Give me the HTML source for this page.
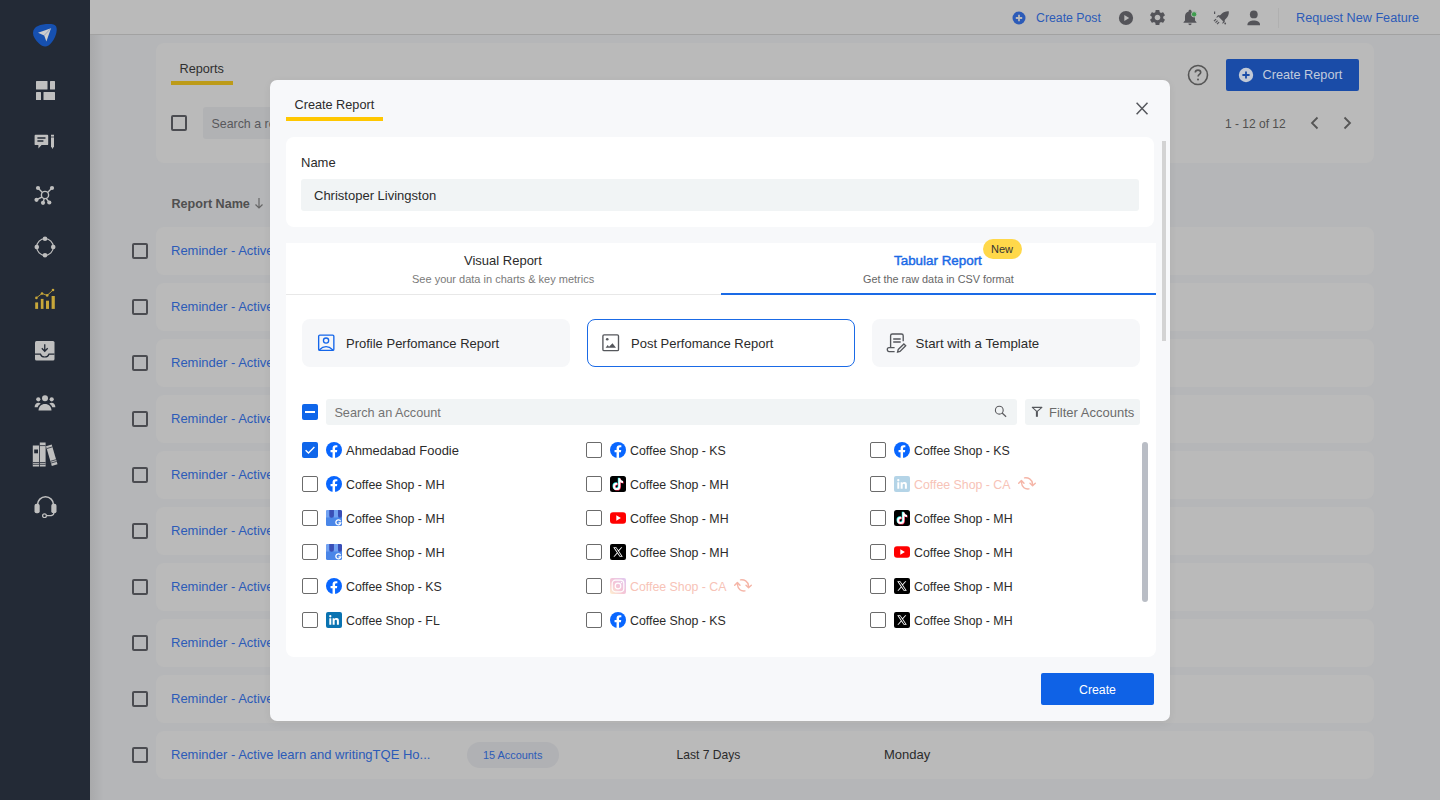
<!DOCTYPE html>
<html><head><meta charset="utf-8">
<style>
*{box-sizing:border-box;margin:0;padding:0}
html,body{width:1440px;height:800px;overflow:hidden;background:#b5b6b8;font-family:"Liberation Sans",sans-serif;color:#2b2b2b}
.a{position:absolute}
.t{position:absolute;white-space:nowrap;line-height:16px}
#side{left:0;top:0;width:90px;height:800px;background:#232a36}
#shadow{left:90px;top:0;width:14px;height:800px;background:linear-gradient(90deg,rgba(0,0,0,0.07),rgba(0,0,0,0))}
#top{left:90px;top:0;width:1350px;height:35px;background:#bababa;border-bottom:1px solid #a2a2a2}
.card{position:absolute;background:#bababa;border-radius:8px}
.cb{position:absolute;width:16px;height:16px;border:2px solid #4b4c51;border-radius:2px}
.lnk{color:#2c5bb8;font-size:13px}
#modal{left:270px;top:80px;width:900px;height:641px;background:#f7f8fa;border-radius:7px;box-shadow:0 2px 8px rgba(0,0,0,0.06)}

.mt{position:absolute;white-space:nowrap;line-height:16px;font-size:13px;color:#2b2b2b}
.acb{position:absolute;width:16px;height:16px;border:1px solid #6b6b6b;border-radius:2px;background:#fff}
.ic{position:absolute;width:16px;height:16px}
.rc{position:absolute;top:319px;width:268px;height:48px;border-radius:8px;background:#f6f7f9}
</style></head><body>
<svg width="0" height="0" style="position:absolute"><defs>
<symbol id="fb" viewBox="0 0 16 16"><circle cx="8" cy="8" r="8" fill="#0866ff"/><path fill="#fff" d="M10.9 10.3l.36-2.3H9.05V6.5c0-.63.31-1.25 1.3-1.25h1V3.3s-.91-.16-1.78-.16c-1.82 0-3 1.1-3 3.1V8H4.55v2.3h2.02V16h2.48v-5.7z"/></symbol>
<symbol id="tt" viewBox="0 0 16 16"><rect width="16" height="16" rx="2.5" fill="#000"/><g id="ttn"><path d="M8.4 2.3h1.9c.2 1.5 1.2 2.6 2.7 2.8v1.9c-1 0-1.9-.3-2.7-.8v4.2a3.6 3.6 0 1 1-3.6-3.6c.2 0 .4 0 .6.05v1.95a1.65 1.65 0 1 0 1.1 1.6z"/></g><use href="#ttn" fill="#25f4ee" x="-.6" y="-.5"/><use href="#ttn" fill="#fe2c55" x=".6" y=".5"/><use href="#ttn" fill="#fff"/></symbol>
<symbol id="yt" viewBox="0 0 16 16"><rect x="0" y="2.3" width="16" height="11.4" rx="3" fill="#ff0000"/><path fill="#fff" d="M6.3 5.3v5.4L10.9 8z"/></symbol>
<symbol id="xx" viewBox="0 0 16 16"><rect width="16" height="16" rx="2" fill="#000"/><path fill="#fff" d="M3.2 3.2h3.1l2.2 3.1 2.7-3.1h1.1l-3.3 3.8 3.8 5.8H9.7L7.4 9.5 4.5 12.8H3.4L6.9 8.8zM4.8 3.9l5.3 8.2h1.2L6 3.9z"/></symbol>
<symbol id="li" viewBox="0 0 16 16"><rect width="16" height="16" rx="2" fill="#0a73b1"/><path fill="#fff" d="M3.3 6.2h2v6.5h-2zM4.3 3.1a1.15 1.15 0 1 1 0 2.3 1.15 1.15 0 0 1 0-2.3zM6.6 6.2h1.9v.9c.3-.5.95-1.05 2-1.05 2.05 0 2.4 1.3 2.4 3v3.65h-2V9.5c0-.75 0-1.7-1.05-1.7s-1.2.8-1.2 1.65v3.25h-2z"/></symbol>
<symbol id="gmb" viewBox="0 0 16 16"><rect width="16" height="16" rx="1.6" fill="#4a86e8"/><path fill="#72a2f2" d="M1.6 0h1.8v7.4H0V1.6A1.6 1.6 0 0 1 1.6 0zM7.8 0h4.2v7.4H7.8z"/><path fill="#3a4eb6" d="M3.3 0h4.6v5.6a2.3 2.2 0 0 1-4.6 0zM12 0h2.4A1.6 1.6 0 0 1 16 1.6v4a2 2.2 0 0 1-4 0z"/><path fill="none" stroke="#fff" stroke-width="1.3" d="M14.6 11.2a2.5 2.5 0 1 0 .2 1.6h-2.3"/></symbol>
<symbol id="ig" viewBox="0 0 16 16"><defs><linearGradient id="igg" x1="0" y1="1" x2="1" y2="0"><stop offset="0" stop-color="#fdd36b"/><stop offset=".45" stop-color="#e1447a"/><stop offset="1" stop-color="#9b4fd0"/></linearGradient></defs><rect width="16" height="16" rx="2" fill="url(#igg)"/><rect x="2.2" y="2.2" width="11.6" height="11.6" rx="3.2" fill="none" stroke="#fff" stroke-width="1.2"/><circle cx="8" cy="8" r="2.8" fill="none" stroke="#fff" stroke-width="1.2"/><circle cx="11.5" cy="4.5" r=".75" fill="#fff"/></symbol>
<symbol id="rf" viewBox="0 0 26 24"><g fill="none" stroke="#f5b5a7" stroke-width="1.4" stroke-linecap="round" stroke-linejoin="round"><path d="M10.5 5.9c3.6-.5 7.6 1.2 8.1 6.3M16 11.3l2.6 2.5 2.7-2.5M15 16.9c-3.7.6-7.2-1.5-7.6-6.6M4.7 11.3l2.7-2.8 2.6 2.8"/></g></symbol>
</defs></svg>
<div id="side" class="a"></div>
<div id="shadow" class="a"></div>
<div id="top" class="a"></div>
<!-- sidebar icons -->
<svg class="a" style="left:28px;top:20px" width="34" height="32" viewBox="0 0 34 32"><path fill="#1650b0" d="M10 6C14 4 22 3.5 25.5 4.5 29 5.5 29.2 9 28.3 13 27.2 18 24 23 20.5 25.5 17.5 27.6 14 26.5 11 23.5 7.5 20 5 16.5 5 13 5 9.5 7 7.2 10 6z"/><path fill="#cdcdcd" d="M23 8.2L10 12.8l6.2 2.6 2.2 6.2z"/><path d="M16.2 15.4L23 8.2" stroke="#6f86b8" stroke-width=".6"/></svg>
<svg class="a" style="left:36px;top:81px" width="19" height="19" viewBox="0 0 19 19"><g fill="#bfbfbf"><rect x="0" y="0" width="11.5" height="8.5" rx=".5"/><rect x="14" y="0" width="5" height="8.5" rx=".5"/><rect x="0" y="11" width="5" height="8.5" rx=".5"/><rect x="7.5" y="11" width="11.5" height="8.5" rx=".5"/></g></svg>
<svg class="a" style="left:34px;top:134px" width="22" height="16" viewBox="0 0 22 16"><path fill="#bfbfbf" d="M1.5 0.8h11.8c.5 0 .9.4.9.9v8.5c0 .5-.4.9-.9.9H7.6l-3.2 3.3v-3.3H1.5c-.5 0-.9-.4-.9-.9V1.7c0-.5.4-.9.9-.9z"/><path d="M3.4 4h8.1M3.4 7h6" stroke="#232a36" stroke-width="1.3"/><path fill="#bfbfbf" d="M17 .8h3v11.4l-1.5 2.8-1.5-2.8z"/><path d="M17 3h3" stroke="#232a36" stroke-width=".8"/></svg>
<svg class="a" style="left:34px;top:185px" width="22" height="20" viewBox="0 0 22 20"><g stroke="#bfbfbf" stroke-width="1.4" fill="none"><circle cx="11" cy="10" r="3.6"/><path d="M8.4 7.4L4.5 3.5M13.6 7.4l3.9-3.9M8 12L3.2 14.3M10.2 13.5l-.9 3.5M12.2 13.4l2.3 3.1"/></g><g fill="#bfbfbf"><circle cx="4" cy="3" r="2.1"/><circle cx="18" cy="3" r="2.1"/><circle cx="2.5" cy="14.8" r="2.1"/><circle cx="9" cy="17.8" r="2.1"/><circle cx="15.3" cy="17.5" r="2.1"/></g></svg>
<svg class="a" style="left:34px;top:236px" width="22" height="22" viewBox="0 0 22 22"><circle cx="11" cy="11" r="8.3" fill="none" stroke="#bfbfbf" stroke-width="1.2"/><g fill="#bfbfbf"><circle cx="11" cy="2.8" r="2.3"/><circle cx="11" cy="19.2" r="2.3"/><circle cx="2.8" cy="11" r="2.3"/><circle cx="19.2" cy="11" r="2.3"/></g></svg>
<svg class="a" style="left:34px;top:288px" width="22" height="22" viewBox="0 0 22 22"><g fill="#c8a73a"><rect x="1.2" y="14.4" width="2.9" height="6.5"/><rect x="6.8" y="10.9" width="2.7" height="10"/><rect x="12" y="12.7" width="3" height="8.2"/><rect x="17.6" y="8" width="3.2" height="12.9"/><circle cx="2.4" cy="9.9" r="1.3"/><circle cx="8" cy="5.5" r="1.3"/><circle cx="13.2" cy="7.4" r="1.3"/><circle cx="19" cy="2" r="1.3"/></g><path d="M2.4 9.9L8 5.5l5.2 1.9L19 2" stroke="#c8a73a" stroke-width=".9" fill="none"/></svg>
<svg class="a" style="left:35px;top:341px" width="20" height="20" viewBox="0 0 20 20"><rect x="0" y="0" width="19.5" height="19.5" rx="1.5" fill="#bfbfbf"/><path d="M0 13.2h5.5c.5 1.6 2.2 2.8 4.2 2.8s3.7-1.2 4.2-2.8h5.6" stroke="#232a36" stroke-width="1.2" fill="none"/><path d="M9.75 3.2v7M6.8 7.3l2.95 2.95 2.95-2.95" stroke="#232a36" stroke-width="1.3" fill="none"/></svg>
<svg class="a" style="left:34px;top:395px" width="22" height="16" viewBox="0 0 22 16"><g fill="#bfbfbf"><circle cx="11" cy="3.3" r="3"/><circle cx="4.3" cy="4.3" r="2.1"/><circle cx="17.7" cy="4.3" r="2.1"/><path d="M4.5 15.5c0-3.8 2.9-6.5 6.5-6.5s6.5 2.7 6.5 6.5z"/><path d="M.6 12.3c0-2.6 1.6-4.5 3.9-4.5.9 0 1.6.2 2.2.6-1.6 1.1-2.6 2.5-3 3.9z"/><path d="M21.4 12.3c0-2.6-1.6-4.5-3.9-4.5-.9 0-1.6.2-2.2.6 1.6 1.1 2.6 2.5 3 3.9z"/></g></svg>
<svg class="a" style="left:32px;top:442px" width="26" height="26" viewBox="0 0 26 26"><g fill="#bfbfbf"><rect x=".8" y="3.5" width="6.2" height="21"/><rect x="7.8" y=".5" width="5.8" height="24"/><path d="M14 4.2l5.7-1.7 5.8 19.8-5.7 1.7z"/></g><rect x="2.2" y="7.5" width="3.8" height="3.8" fill="#232a36"/><path d="M.8 20.5h6.2M.8 22.3h6.2M7.8 20.5h5.8M7.8 22.3h5.8M7.8 3.6h5.8M18.5 19.3l5.7-1.7M19 21.1l5.7-1.7M15 6.5l5.6-1.7" stroke="#232a36" stroke-width=".8"/></svg>
<svg class="a" style="left:34px;top:495px" width="23" height="23" viewBox="0 0 23 23"><path d="M3.5 12V9.8a8 8 0 0 1 16 0V12" fill="none" stroke="#bfbfbf" stroke-width="1.5"/><rect x=".5" y="8.8" width="5.2" height="9.5" rx="2" fill="#bfbfbf"/><rect x="17.3" y="8.8" width="5.2" height="9.5" rx="2" fill="#bfbfbf"/><path d="M19.8 18c0 1.8-1.8 2.7-4.6 2.7h-2.6" fill="none" stroke="#bfbfbf" stroke-width="1.3"/><circle cx="10.5" cy="20.7" r="1.9" fill="none" stroke="#bfbfbf" stroke-width="1.3"/></svg>

<!-- header card -->
<div class="card" style="left:156px;top:43px;width:1218px;height:120px"></div>
<!-- rows -->
<div class="card" style="left:156px;top:227px;width:1218px;height:48px"></div>
<div class="card" style="left:156px;top:283px;width:1218px;height:48px"></div>
<div class="card" style="left:156px;top:339px;width:1218px;height:48px"></div>
<div class="card" style="left:156px;top:395px;width:1218px;height:48px"></div>
<div class="card" style="left:156px;top:451px;width:1218px;height:48px"></div>
<div class="card" style="left:156px;top:507px;width:1218px;height:48px"></div>
<div class="card" style="left:156px;top:563px;width:1218px;height:48px"></div>
<div class="card" style="left:156px;top:619px;width:1218px;height:48px"></div>
<div class="card" style="left:156px;top:675px;width:1218px;height:48px"></div>
<div class="card" style="left:156px;top:731px;width:1218px;height:48px"></div>

<!-- topbar content -->
<svg class="a" style="left:1012px;top:11px" width="14" height="14" viewBox="0 0 14 14"><circle cx="7" cy="7" r="6.5" fill="#2c5bb8"/><path d="M7 3.8v6.4M3.8 7h6.4" stroke="#bababa" stroke-width="1.8"/></svg>
<div class="t lnk" style="left:1036px;top:10px;font-size:12.3px">Create Post</div>
<svg class="a" style="left:1118px;top:10px" width="16" height="16" viewBox="0 0 16 16"><circle cx="8" cy="8" r="7.1" fill="#545459"/><path d="M6.3 4.9v6.2l4.9-3.1z" fill="#bababa"/></svg>
<svg class="a" style="left:1148px;top:8px" width="19" height="19" viewBox="0 0 24 24"><path fill="#545459" d="M19.14 12.94c.04-.3.06-.61.06-.94 0-.32-.02-.64-.07-.94l2.03-1.58a.49.49 0 0 0 .12-.61l-1.92-3.32a.488.488 0 0 0-.59-.22l-2.39.96c-.5-.38-1.03-.7-1.62-.94l-.36-2.540a.484.484 0 0 0-.48-.41h-3.84c-.24 0-.43.17-.47.41l-.36 2.54c-.59.24-1.13.57-1.62.94l-2.39-.96c-.22-.08-.47 0-.59.22L2.74 8.87c-.12.21-.08.47.12.61l2.03 1.58c-.05.3-.09.63-.09.94s.02.64.07.94l-2.03 1.58a.49.49 0 0 0-.12.61l1.92 3.32c.12.22.37.29.59.22l2.39-.96c.5.38 1.03.7 1.62.94l.36 2.54c.05.24.24.41.48.41h3.840c.24 0 .44-.17.47-.41l.36-2.54c.59-.24 1.13-.56 1.62-.94l2.39.96c.22.08.47 0 .59-.22l1.92-3.32c.12-.22.07-.47-.12-.61l-2.01-1.58zM12 15.6c-1.98 0-3.6-1.62-3.6-3.6s1.62-3.6 3.6-3.6 3.6 1.62 3.6 3.6-1.62 3.6-3.6 3.6z"/></svg>
<svg class="a" style="left:1182px;top:9px" width="17" height="17" viewBox="0 0 17 17"><path fill="#545459" d="M8 16.2c.9 0 1.6-.7 1.6-1.6H6.4c0 .9.7 1.6 1.6 1.6zm5-4.6V7.6c0-2.5-1.3-4.5-3.6-5V2c0-.7-.6-1.3-1.4-1.3S6.6 1.3 6.6 2v.6C4.3 3.1 3 5.1 3 7.6v4L1.5 13.2v.6h13v-.6z"/><circle cx="12.1" cy="5.3" r="2.7" fill="#3e9d4e" stroke="#bababa" stroke-width=".9"/></svg>
<svg class="a" style="left:1213px;top:10px" width="17" height="16" viewBox="0 0 17 16"><path fill="#545459" d="M15.8 1.2c-2.6-.3-5.4.7-7.4 2.7L5.6 6.7l4.7 4.7 2.8-2.8c2-2 3-4.8 2.7-7.4z"/><path fill="#545459" d="M5 7.3l-2 .3 2-2.3 2.2-.2zM9.7 12l-.3 2 2.3-2 .2-2.2z"/><path d="M1.6 1.5v2.5M4.6 10.6L2.5 12.7M6.1 12.1L4 14.2M3.1 9.1L1 11.2" stroke="#545459" stroke-width="1.2"/><circle cx="12.2" cy="13.5" r=".9" fill="#545459"/></svg>
<svg class="a" style="left:1246px;top:10px" width="15" height="16" viewBox="0 0 15 16"><circle cx="7.8" cy="4.4" r="3.9" fill="#545459"/><path fill="#545459" d="M1.5 15.2v-.9c0-2.5 3.4-3.9 6.3-3.9s6.2 1.4 6.2 3.9v.9z"/></svg>
<div class="a" style="left:1278px;top:8px;width:1px;height:20px;background:#b0b0b0"></div>
<div class="t lnk" style="left:1296px;top:10px;font-size:12.65px">Request New Feature</div>

<!-- header card content -->
<div class="t" style="left:179.5px;top:60.6px;font-size:12.7px;color:#2f2f2f">Reports</div>
<div class="a" style="left:171px;top:81px;width:62px;height:4px;background:#bd9b18"></div>
<div class="cb" style="left:171px;top:115px"></div>
<div class="a" style="left:203px;top:107px;width:300px;height:32px;background:#b1b2b4;border-radius:3px"></div>
<div class="t" style="left:211.5px;top:115.7px;font-size:12.4px;color:#58585c">Search a report</div>
<svg class="a" style="left:1187px;top:64px" width="22" height="22" viewBox="0 0 22 22"><circle cx="11" cy="11" r="9.5" fill="none" stroke="#555" stroke-width="1.6"/><path d="M8.3 8.6c0-1.5 1.2-2.5 2.7-2.5s2.7 1 2.7 2.4c0 1.9-2.6 2-2.6 4" fill="none" stroke="#555" stroke-width="1.6"/><circle cx="11" cy="15.5" r="1" fill="#555"/></svg>
<div class="a" style="left:1226px;top:59px;width:133px;height:32px;background:#1a4ca8;border-radius:2px"></div>
<svg class="a" style="left:1238px;top:67px" width="16" height="16" viewBox="0 0 16 16"><circle cx="8" cy="8" r="7.2" fill="#c2c9d6"/><path d="M8 4.4v7.2M4.4 8h7.2" stroke="#1a4ca8" stroke-width="1.8"/></svg>
<div class="t" style="left:1262.5px;top:67px;font-size:12.7px;color:#c3ccdd">Create Report</div>
<div class="t" style="left:1225px;top:115.5px;font-size:12px;color:#505050">1 - 12 of 12</div>
<svg class="a" style="left:1309px;top:116px" width="12" height="14" viewBox="0 0 12 14"><path d="M8.5 1.5L3 7l5.5 5.5" fill="none" stroke="#555" stroke-width="1.8"/></svg>
<svg class="a" style="left:1341px;top:116px" width="12" height="14" viewBox="0 0 12 14"><path d="M3.5 1.5L9 7l-5.5 5.5" fill="none" stroke="#555" stroke-width="1.8"/></svg>

<!-- table header -->
<div class="t" style="left:171.5px;top:195.5px;font-size:12.6px;font-weight:bold;color:#505050">Report Name</div>
<svg class="a" style="left:254px;top:197px" width="10" height="13" viewBox="0 0 10 13"><path d="M5 1v10M1.5 7.5L5 11l3.5-3.5" fill="none" stroke="#666" stroke-width="1.2"/></svg>
<div class="cb" style="left:132px;top:243px"></div>
<div class="t lnk" style="left:171px;top:243px">Reminder - Active learn and writing</div>
<div class="cb" style="left:132px;top:299px"></div>
<div class="t lnk" style="left:171px;top:299px">Reminder - Active learn and writing</div>
<div class="cb" style="left:132px;top:355px"></div>
<div class="t lnk" style="left:171px;top:355px">Reminder - Active learn and writing</div>
<div class="cb" style="left:132px;top:411px"></div>
<div class="t lnk" style="left:171px;top:411px">Reminder - Active learn and writing</div>
<div class="cb" style="left:132px;top:467px"></div>
<div class="t lnk" style="left:171px;top:467px">Reminder - Active learn and writing</div>
<div class="cb" style="left:132px;top:523px"></div>
<div class="t lnk" style="left:171px;top:523px">Reminder - Active learn and writing</div>
<div class="cb" style="left:132px;top:579px"></div>
<div class="t lnk" style="left:171px;top:579px">Reminder - Active learn and writing</div>
<div class="cb" style="left:132px;top:635px"></div>
<div class="t lnk" style="left:171px;top:635px">Reminder - Active learn and writing</div>
<div class="cb" style="left:132px;top:691px"></div>
<div class="t lnk" style="left:171px;top:691px">Reminder - Active learn and writing</div>
<div class="cb" style="left:132px;top:747px"></div>
<div class="t lnk" style="left:171px;top:747px">Reminder - Active learn and writingTQE Ho...</div>
<div class="a" style="left:467px;top:742px;width:92px;height:26px;border-radius:13px;background:#b0b1b4"></div>
<div class="t" style="left:483px;top:747px;font-size:10.9px;color:#2c5bb8">15 Accounts</div>
<div class="t" style="left:676.5px;top:746.5px;font-size:12.1px;color:#2b2b2b">Last 7 Days</div>
<div class="t" style="left:884px;top:746.5px;font-size:13px;color:#2b2b2b">Monday</div>

<div id="modal" class="a"></div>
<div class="mt" style="left:294.5px;top:97px;font-size:12.7px">Create Report</div>
<div class="a" style="left:286px;top:117px;width:97px;height:4px;background:#ffc700"></div>
<svg class="a" style="left:1135px;top:101px" width="15" height="15" viewBox="0 0 15 15"><path d="M1.6 1.7l10.9 11.5M12.5 1.7L1.6 13.2" stroke="#56585d" stroke-width="1.5"/></svg>
<div class="a" style="left:1162px;top:141px;width:4px;height:200px;background:#d3d3d3"></div>
<div class="a" style="left:286px;top:137px;width:868px;height:90px;background:#fff;border-radius:8px"></div>
<div class="mt" style="left:301px;top:155px">Name</div>
<div class="a" style="left:301px;top:179px;width:838px;height:32px;background:#f1f4f5;border-radius:3px"></div>
<div class="mt" style="left:314px;top:187.7px">Christoper Livingston</div>

<div class="a" style="left:286px;top:243px;width:870px;height:414px;background:#fff;border-radius:0 0 8px 8px"></div>
<div class="a" style="left:286px;top:294px;width:870px;height:1px;background:#e8e8e8"></div>
<div class="a" style="left:721px;top:293px;width:435px;height:2px;background:#1a6ae6"></div>
<div class="mt" style="left:464px;top:253px">Visual Report</div>
<div class="mt" style="left:412px;top:271px;font-size:11px;color:#7a7a7a">See your data in charts &amp; key metrics</div>
<div class="mt" style="left:894px;top:252.6px;color:#1a6ae6;font-size:13.4px;-webkit-text-stroke:.45px #1a6ae6">Tabular Report</div>
<div class="a" style="left:983px;top:239px;width:39px;height:20px;border-radius:10px;background:#ffd84a"></div>
<div class="mt" style="left:991px;top:241px;font-size:11px;color:#333">New</div>
<div class="mt" style="left:863px;top:271px;font-size:10.85px;color:#666">Get the raw data in CSV format</div>

<div class="rc" style="left:302px"></div>
<svg class="a" style="left:312px;top:328px" width="30" height="30" viewBox="0 0 30 30"><g fill="none" stroke="#1466ea" stroke-width="1.35"><rect x="6.65" y="7.05" width="15.2" height="15.3" rx="1.2"/><circle cx="14.06" cy="12.56" r="2.6"/><path d="M7.2 21.9Q14.06 15.4 20.9 21.9"/></g></svg>
<div class="mt" style="left:346px;top:336px">Profile Perfomance Report</div>
<div class="rc" style="left:587px;background:#fff;border:1px solid #1a6ae6"></div>
<svg class="a" style="left:596px;top:328px" width="30" height="30" viewBox="0 0 30 30"><rect x="6.9" y="6.9" width="15.6" height="15.7" rx="1.2" fill="none" stroke="#55575c" stroke-width="1.35"/><circle cx="11.25" cy="11.25" r="1.3" fill="#55575c"/><path d="M9.6 19.8L11.7 16.9l1.3 1.8 3.5-3.5 3.5 4.6z" fill="#55575c"/></svg>
<div class="mt" style="left:631px;top:336px">Post Perfomance Report</div>
<div class="rc" style="left:872px"></div>
<svg class="a" style="left:881px;top:328px" width="30" height="30" viewBox="0 0 30 30"><g fill="none" stroke="#55575c" stroke-width="1.35"><path d="M9.6 19.3V7.8A1.8 1.8 0 0 1 11.4 6H20.4A1.8 1.8 0 0 1 22.2 7.8V13.3"/><path d="M12.2 10.9H19.7M12.2 13.9H19.7" stroke-width="1.5"/><path d="M13.6 19.6H8A1.7 2 0 0 0 6.3 21.6 1.7 2 0 0 0 8 23.6H13.6"/><path d="M17.2 21.6L22.9 15.9 24.7 17.7 19 23.4 16.6 24z"/></g></svg>
<div class="mt" style="left:915.6px;top:336px;font-size:13.28px">Start with a Template</div>

<div class="a" style="left:302px;top:404px;width:16px;height:16px;border-radius:2px;background:#0f66ea"></div>
<div class="a" style="left:305px;top:411px;width:10px;height:2px;background:#fff"></div>
<div class="a" style="left:326px;top:399px;width:691px;height:26px;background:#f1f4f5;border-radius:3px"></div>
<div class="mt" style="left:334.4px;top:405px;font-size:12.7px;color:#737373">Search an Account</div>
<svg class="a" style="left:994px;top:405px" width="13" height="13" viewBox="0 0 13 13"><circle cx="5.3" cy="5.2" r="3.9" fill="none" stroke="#5a5a5e" stroke-width="1.1"/><path d="M8.1 8l4 3.75" stroke="#5a5a5e" stroke-width="1.2"/></svg>
<div class="a" style="left:1025px;top:399px;width:115px;height:26px;background:#f1f4f5;border-radius:3px"></div>
<svg class="a" style="left:1031px;top:406px" width="12" height="12" viewBox="0 0 12 12"><path d="M1.3 1.4h9.6L6 5.6z" fill="none" stroke="#55575c" stroke-width="1.1" stroke-linejoin="round"/><rect x="4.9" y="5.3" width="2" height="5.5" fill="#55575c"/></svg>
<div class="mt" style="left:1049px;top:405px;color:#6b6b6b">Filter Accounts</div>
<div class="a" style="left:1142px;top:442px;width:6px;height:160px;background:#b9bdc5;border-radius:3px"></div>
<div class="a" style="left:302px;top:442px;width:16px;height:16px;border-radius:2px;background:#0f66ea"></div><svg class="a" style="left:302px;top:442px" width="16" height="16" viewBox="0 0 16 16"><path d="M3.6 8.2l2.9 2.9 5.9-6" fill="none" stroke="#fff" stroke-width="1.4"/></svg>
<svg class="ic" style="left:326px;top:442px"><use href="#fb"/></svg><div class="mt" style="left:346px;top:443px;font-size:12.95px;color:#2b2b2b">Ahmedabad Foodie</div>
<div class="acb" style="left:586px;top:442px"></div><svg class="ic" style="left:610px;top:442px"><use href="#fb"/></svg><div class="mt" style="left:630px;top:443px;font-size:12.35px;color:#2b2b2b">Coffee Shop - KS</div>
<div class="acb" style="left:870px;top:442px"></div><svg class="ic" style="left:894px;top:442px"><use href="#fb"/></svg><div class="mt" style="left:914px;top:443px;font-size:12.35px;color:#2b2b2b">Coffee Shop - KS</div>
<div class="acb" style="left:302px;top:476px"></div><svg class="ic" style="left:326px;top:476px"><use href="#fb"/></svg><div class="mt" style="left:346px;top:477px;font-size:12.35px;color:#2b2b2b">Coffee Shop - MH</div>
<div class="acb" style="left:586px;top:476px"></div><svg class="ic" style="left:610px;top:476px"><use href="#tt"/></svg><div class="mt" style="left:630px;top:477px;font-size:12.35px;color:#2b2b2b">Coffee Shop - MH</div>
<div class="acb" style="left:870px;top:476px"></div><svg class="ic" style="opacity:.3;left:894px;top:476px"><use href="#li"/></svg><div class="mt" style="left:914px;top:477px;font-size:12.35px;color:#f7c3b7">Coffee Shop - CA</div>
<svg class="a" style="left:1014px;top:472px" width="26" height="24"><use href="#rf"/></svg>
<div class="acb" style="left:302px;top:510px"></div><svg class="ic" style="left:326px;top:510px"><use href="#gmb"/></svg><div class="mt" style="left:346px;top:511px;font-size:12.35px;color:#2b2b2b">Coffee Shop - MH</div>
<div class="acb" style="left:586px;top:510px"></div><svg class="ic" style="left:610px;top:510px"><use href="#yt"/></svg><div class="mt" style="left:630px;top:511px;font-size:12.35px;color:#2b2b2b">Coffee Shop - MH</div>
<div class="acb" style="left:870px;top:510px"></div><svg class="ic" style="left:894px;top:510px"><use href="#tt"/></svg><div class="mt" style="left:914px;top:511px;font-size:12.35px;color:#2b2b2b">Coffee Shop - MH</div>
<div class="acb" style="left:302px;top:544px"></div><svg class="ic" style="left:326px;top:544px"><use href="#gmb"/></svg><div class="mt" style="left:346px;top:545px;font-size:12.35px;color:#2b2b2b">Coffee Shop - MH</div>
<div class="acb" style="left:586px;top:544px"></div><svg class="ic" style="left:610px;top:544px"><use href="#xx"/></svg><div class="mt" style="left:630px;top:545px;font-size:12.35px;color:#2b2b2b">Coffee Shop - MH</div>
<div class="acb" style="left:870px;top:544px"></div><svg class="ic" style="left:894px;top:544px"><use href="#yt"/></svg><div class="mt" style="left:914px;top:545px;font-size:12.35px;color:#2b2b2b">Coffee Shop - MH</div>
<div class="acb" style="left:302px;top:578px"></div><svg class="ic" style="left:326px;top:578px"><use href="#fb"/></svg><div class="mt" style="left:346px;top:579px;font-size:12.35px;color:#2b2b2b">Coffee Shop - KS</div>
<div class="acb" style="left:586px;top:578px"></div><svg class="ic" style="opacity:.3;left:610px;top:578px"><use href="#ig"/></svg><div class="mt" style="left:630px;top:579px;font-size:12.35px;color:#f7c3b7">Coffee Shop - CA</div>
<svg class="a" style="left:730px;top:574px" width="26" height="24"><use href="#rf"/></svg>
<div class="acb" style="left:870px;top:578px"></div><svg class="ic" style="left:894px;top:578px"><use href="#xx"/></svg><div class="mt" style="left:914px;top:579px;font-size:12.35px;color:#2b2b2b">Coffee Shop - MH</div>
<div class="acb" style="left:302px;top:612px"></div><svg class="ic" style="left:326px;top:612px"><use href="#li"/></svg><div class="mt" style="left:346px;top:613px;font-size:12.35px;color:#2b2b2b">Coffee Shop - FL</div>
<div class="acb" style="left:586px;top:612px"></div><svg class="ic" style="left:610px;top:612px"><use href="#fb"/></svg><div class="mt" style="left:630px;top:613px;font-size:12.35px;color:#2b2b2b">Coffee Shop - KS</div>
<div class="acb" style="left:870px;top:612px"></div><svg class="ic" style="left:894px;top:612px"><use href="#xx"/></svg><div class="mt" style="left:914px;top:613px;font-size:12.35px;color:#2b2b2b">Coffee Shop - MH</div>

<div class="a" style="left:1041px;top:673px;width:113px;height:32px;background:#0f62e6;border-radius:2px"></div>
<div class="mt" style="left:1079px;top:681.5px;font-size:12.3px;color:#fff">Create</div>

</body></html>
